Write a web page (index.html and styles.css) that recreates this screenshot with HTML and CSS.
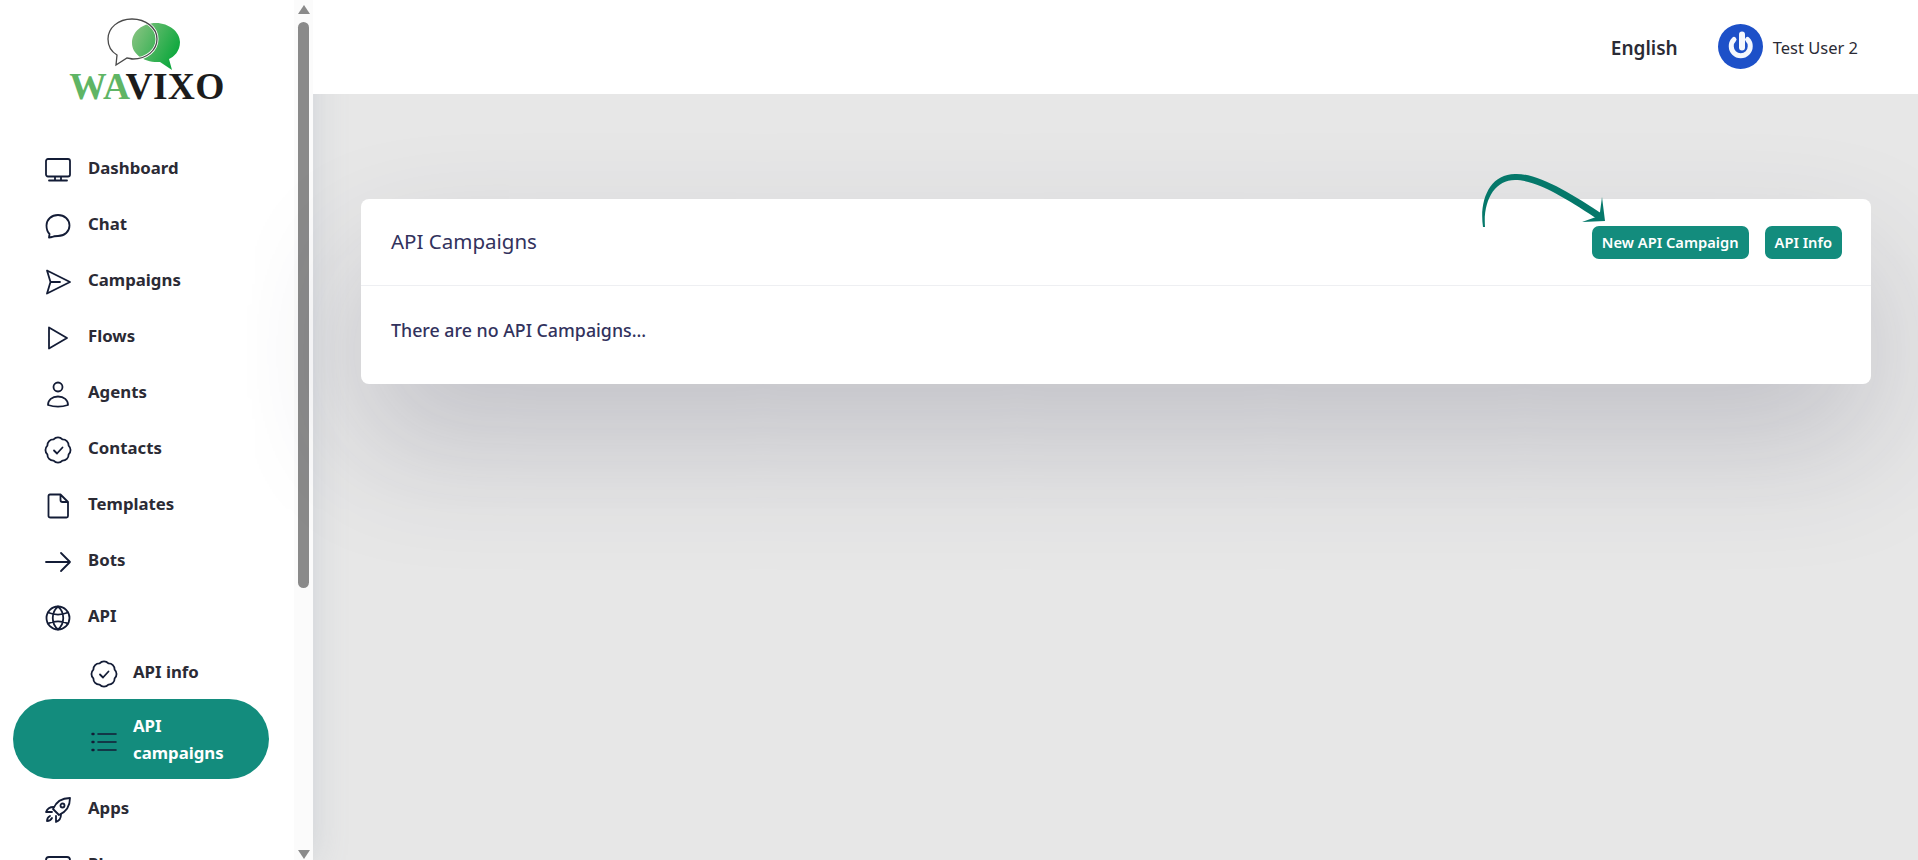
FILE: index.html
```html
<!DOCTYPE html>
<html lang="en">
<head>
    <meta charset="UTF-8">
    <meta name="viewport" content="width=device-width, initial-scale=1.0">
    <title>API Campaigns</title>
    <link rel="stylesheet" href="styles.css">
</head>
<body>

    <div class="layout">
        <!-- Sidebar -->
        <aside class="sidebar">
            <div class="sidebar-inner">
                <div class="brand">
                    <svg class="brand-mark" width="74" height="54" viewBox="0 0 74 54">
                        <defs>
                            <linearGradient id="bubble" x1="0" y1="0" x2="1" y2="0.5">
                                <stop offset="0" stop-color="#8fc585"/>
                                <stop offset="1" stop-color="#0fa83e"/>
                            </linearGradient>
                        </defs>
                        <path d="M49 5C62 5 73 14 73 24 73 33 67 39 62 41L65 52 53 44C37 45 25 36 25 25 25 14 35 5 49 5z" fill="url(#bubble)"/>
                        <path d="M25 1C11 1 1 10 1 21 1 29 5 34 10 37L9 47 20 40C22 40 24 41 26 41 40 41 50 32 50 21 50 10 39 1 25 1z" fill="none" stroke="#ffffff" stroke-width="3"/>
                        <path d="M25 1C11 1 1 10 1 21 1 29 5 34 10 37L9 47 20 40C22 40 24 41 26 41 40 41 50 32 50 21 50 10 39 1 25 1z" fill="none" stroke="#4a4a4a" stroke-width="1.300"/>
                    </svg>
                    <div class="brand-name"><span class="brand-wa">WA</span>VIXO</div>
                </div>

                <nav class="nav">
                    <a class="nav-item">
                        <svg class="icon" viewBox="0 0 28 28"><rect x="2" y="3" width="24" height="17.500" rx="2"/><path d="M5 24.500h18M11 21v3.500M17 21v3.500"/></svg>
                        <span>Dashboard</span>
                    </a>
                    <a class="nav-item">
                        <svg class="icon" viewBox="0 0 28 28"><path d="M14 3c6.500 0 11.500 4.500 11.500 10.500S20.500 24 14 24c-2 0-4 0-6 1l-3 .5 .5-3.500C3.500 20 2.500 17 2.500 13.500 2.500 7.500 7.500 3 14 3z"/></svg>
                        <span>Chat</span>
                    </a>
                    <a class="nav-item">
                        <svg class="icon" viewBox="0 0 28 28"><path d="M3 2.500 26 14 3 25.500 6.500 14zM6.500 14H16"/></svg>
                        <span>Campaigns</span>
                    </a>
                    <a class="nav-item">
                        <svg class="icon" viewBox="0 0 28 28"><path d="M5 3.500 23 14 5 24.500z"/></svg>
                        <span>Flows</span>
                    </a>
                    <a class="nav-item">
                        <svg class="icon" viewBox="0 0 28 28"><circle cx="14" cy="7" r="4.500"/><path d="M4 25c0-5 4-8.500 10-8.500S24 20 24 25c-6 2-14 2-20 0z"/></svg>
                        <span>Agents</span>
                    </a>
                    <a class="nav-item">
                        <svg class="icon" viewBox="0 0 28 28"><path d="M9.600 3.380A6 6 0 0 1 18.400 3.380 6 6 0 0 1 24.620 9.600 6 6 0 0 1 24.620 18.400 6 6 0 0 1 18.400 24.620 6 6 0 0 1 9.600 24.620 6 6 0 0 1 3.380 18.400 6 6 0 0 1 3.380 9.600 6 6 0 0 1 9.600 3.380z"/><path d="M10 14.500l3 3 5.500-6"/></svg>
                        <span>Contacts</span>
                    </a>
                    <a class="nav-item">
                        <svg class="icon" viewBox="0 0 28 28"><path d="M6 2.500h10.500L24 10v14c0 1-.5 1.500-1.500 1.500h-16C5 25.500 4.500 25 4.500 24V4C4.500 3 5 2.500 6 2.500zM16.500 2.500V8c0 1 1 2 2 2H24"/></svg>
                        <span>Templates</span>
                    </a>
                    <a class="nav-item">
                        <svg class="icon" viewBox="0 0 28 28"><path d="M2 14h24M17 5l9 9-9 9"/></svg>
                        <span>Bots</span>
                    </a>
                    <a class="nav-item">
                        <svg class="icon" viewBox="0 0 28 28"><circle cx="14" cy="14" r="11.500"/><path d="M14 2.500c-7 6-7 17 0 23M14 2.500c7 6 7 17 0 23M4 8.500c6 2.500 14 2.500 20 0M4 19.500c6-2.500 14-2.500 20 0"/></svg>
                        <span>API</span>
                    </a>
                    <a class="nav-item nav-sub">
                        <svg class="icon" viewBox="0 0 28 28"><path d="M9.600 3.380A6 6 0 0 1 18.400 3.380 6 6 0 0 1 24.620 9.600 6 6 0 0 1 24.620 18.400 6 6 0 0 1 18.400 24.620 6 6 0 0 1 9.600 24.620 6 6 0 0 1 3.380 18.400 6 6 0 0 1 3.380 9.600 6 6 0 0 1 9.600 3.380z"/><path d="M10 14.500l3 3 5.500-6"/></svg>
                        <span>API info</span>
                    </a>
                    <a class="nav-item nav-sub active">
                        <svg class="icon" viewBox="0 0 28 28"><path d="M8 6h18M8 14h18M8 22h18"/><path class="dots" d="M2.500 6h1M2.500 14h1M2.500 22h1"/></svg>
                        <span>API campaigns</span>
                    </a>
                    <a class="nav-item">
                        <svg class="icon" viewBox="0 0 28 28"><path d="M26 2C18 2 12 6 9 13L15 19C22 16 26 10 26 2z"/><circle cx="18.500" cy="9.500" r="2"/><path d="M9.500 11C6 11 3.500 12 2 16L8 16M17 18.500C17 22 16 24.500 12 26L12 20M6 20C4 21 3 23 3 25 5 25 7 24 8 22"/></svg>
                        <span>Apps</span>
                    </a>
                    <a class="nav-item">
                        <svg class="icon" viewBox="0 0 28 28"><rect x="2" y="5" width="24" height="18" rx="3"/><path d="M2 11h24"/></svg>
                        <span>Plan</span>
                    </a>
                </nav>
            </div>

            <!-- Scrollbar drawn by hand -->
            <div class="scrollbar">
                <div class="arrow-up"></div>
                <div class="thumb"></div>
                <div class="arrow-down"></div>
            </div>
        </aside>

        <div class="main">
            <!-- Topbar -->
            <header class="topbar">
                <span class="lang">English</span>
                <div class="user">
                    <svg class="avatar" width="45" height="45" viewBox="0 0 45 45">
                        <circle cx="22.500" cy="22.500" r="22.500" fill="#1d50c8"/>
                        <path d="M16 15.500a9.500 9.500 0 1 0 13.500 0" fill="none" stroke="#f4f7fd" stroke-width="5" stroke-linecap="round"/>
                        <path d="M24 10.500v13" stroke="#f4f7fd" stroke-width="6" stroke-linecap="round"/>
                    </svg>
                    <span class="user-name">Test User 2</span>
                </div>
            </header>

            <div class="content">
                <section class="card">
                    <div class="card-header">
                        <h3 class="card-title">API Campaigns</h3>
                        <div class="card-actions">
                            <svg class="arrow" width="130" height="60" viewBox="0 0 130 60">
                                <path d="M3 57C-1 30 10 4 35 4 58 3 92 24 122 44L119 50C90 31 58 10 35 10 15 10 3 30 5 57z" fill="#05786a"/>
                                <path d="M122 27 125 51 102 52 116 47 120 42z" fill="#05786a"/>
                            </svg>
                            <button class="btn">New API Campaign</button>
                            <button class="btn">API Info</button>
                        </div>
                    </div>
                    <div class="card-body">There are no API Campaigns...</div>
                </section>
            </div>
        </div>
    </div>

</body>
</html>
```

FILE: styles.css
```css
* {
    box-sizing: border-box;
}

html, body {
    height: 100%;
}

body {
    margin: 0;
    font-family: "Noto Sans", "Open Sans", sans-serif;
    background-color: #fff;
    overflow: hidden;
}

.layout {
    display: flex;
    height: 860px;
}

.sidebar {
    width: 313px;
    flex: none;
    display: flex;
    background-color: #fff;
    overflow: hidden;
    position: relative;
    z-index: 1;
    box-shadow: 0 0 32px rgba(136, 152, 170, 0.25);
}

.sidebar-inner {
    width: 294px;
    flex: none;
}

.brand {
    height: 126px;
    padding-top: 18px;
    display: flex;
    flex-direction: column;
    align-items: center;
}

.brand-mark {
    margin-left: -6px;
    display: block;
}

.brand-name {
    margin-top: -2px;
    font-family: "Liberation Serif", serif;
    font-weight: bold;
    font-size: 37.500px;
    line-height: 34px;
    letter-spacing: 0.3px;
    color: #1c1c1c;
}

.brand-wa {
    color: #5fb565;
}

.nav {
    padding-top: 16px;
}

.nav-item {
    display: flex;
    align-items: center;
    height: 56px;
    padding-left: 44px;
    font-size: 16.800px;
    font-weight: 700;
    color: #2b2b35;
}

.nav-item span {
    display: block;
    margin-top: -6px;
}

.icon {
    width: 28px;
    height: 28px;
    margin-right: 16px;
    flex: none;
    fill: none;
    stroke: #131c36;
    stroke-width: 1.800;
    stroke-linecap: round;
    stroke-linejoin: round;
}

.nav-sub {
    padding-left: 90px;
}

.nav-sub .icon {
    margin-right: 15px;
}

.nav-item.active {
    margin: -3px 0 3px 13px;
    width: 256px;
    height: 80px;
    padding-left: 77px;
    border-radius: 40px;
    background-color: #138c7d;
    color: #fff;
    line-height: 27px;
}

.active .icon {
    margin-top: 6px;
    stroke-width: 1.600;
}

.active .dots {
    stroke-width: 2.400;
}

.active span {
    width: 110px;
    margin-top: 0;
}

/* scrollbar */
.scrollbar {
    width: 19px;
    flex: none;
    display: flex;
    flex-direction: column;
    align-items: center;
    background-color: #fbfbfb;
}

.arrow-up {
    width: 0;
    height: 0;
    margin-top: 5px;
    border-left: 6.500px solid transparent;
    border-right: 6.500px solid transparent;
    border-bottom: 9px solid #8a8a8a;
}

.thumb {
    width: 11px;
    height: 566px;
    margin-top: 8px;
    border-radius: 6px;
    background-color: #8a8a8a;
}

.arrow-down {
    width: 0;
    height: 0;
    margin-top: auto;
    margin-bottom: 1px;
    border-left: 6.500px solid transparent;
    border-right: 6.500px solid transparent;
    border-top: 9px solid #8a8a8a;
}

.main {
    flex: 1;
    min-width: 0;
    display: flex;
    flex-direction: column;
    background-color: #e7e7e7;
}

.topbar {
    height: 94px;
    flex: none;
    display: flex;
    align-items: center;
    justify-content: flex-end;
    padding-right: 60px;
    background-color: #fff;
    position: relative;
    z-index: 3;
}

.lang {
    font-size: 19px;
    font-weight: 600;
    color: #2b2b35;
    margin: 2px 40px 0 0;
}

.user {
    display: flex;
    align-items: center;
}

.avatar {
    margin: -1px 10px 0 0;
}

.user-name {
    font-size: 16.500px;
    color: #2b2b35;
    margin-top: 1px;
}

.content {
    flex: 1;
    padding: 105px 47px 0 48px;
}

.card {
    background-color: #fff;
    border-radius: 8px;
    box-shadow: 0 60px 130px rgba(50, 50, 80, 0.2);
    position: relative;
    z-index: 2;
}

.card-header {
    height: 87px;
    display: flex;
    align-items: center;
    justify-content: space-between;
    padding: 0 29px 0 30px;
    border-bottom: 1px solid #eeeff2;
}

.card-title {
    margin: 0 0 2px;
    font-size: 20.500px;
    font-weight: 400;
    color: #32325d;
}

.card-actions {
    display: flex;
    align-items: center;
    gap: 16px;
    position: relative;
}

.btn {
    height: 33px;
    padding: 0 10px;
    border: none;
    border-radius: 7px;
    background-color: #138c7d;
    color: #fff;
    font-family: inherit;
    font-size: 14.700px;
    font-weight: 600;
}

/* hand drawn arrow, sits over the card edge */
.arrow {
    position: absolute;
    right: 232px;
    top: -56px;
}

.card-body {
    padding: 27px 30px 37px;
    font-size: 17.800px;
    line-height: 34px;
    color: #32325d;
    font-weight: 500;
}
```
